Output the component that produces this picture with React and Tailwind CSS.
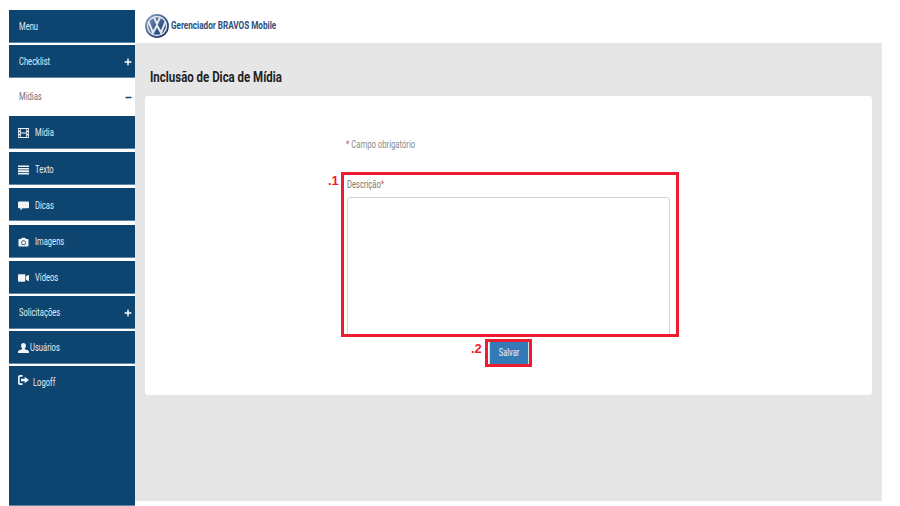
// Tela de inclusao de dica de midia
import { FaCamera, FaVideo, FaPlus, FaMinus } from 'react-icons/fa'

function IconFilm({ className }) {
  return (
    <svg viewBox="0 0 12 11" className={className} fill="currentColor">
      <path fillRule="evenodd" d="M0 0h12v11H0z M3 1.2v3.7h6V1.2z M3 6.100v3.700h6V6.100z M.8 1.200v1.600h1.300V1.200z M.8 4.700v1.600h1.300V4.700z M.8 8.200v1.600h1.300V8.200z M9.900 1.200v1.600h1.300V1.200z M9.900 4.700v1.600h1.300V4.700z M9.900 8.200v1.600h1.300V8.200z" />
    </svg>
  )
}

function IconLinhas({ className }) {
  return (
    <svg viewBox="0 0 12 10" className={className} fill="currentColor">
      <path d="M0 0h12v1.800H0z M0 2.700h12v1.800H0z M0 5.400h12v1.800H0z M0 8.100h12v1.800H0z" />
    </svg>
  )
}

function IconBalao({ className }) {
  return (
    <svg viewBox="0 0 12 10" className={className} fill="currentColor">
      <path d="M1.200 0h9.600C11.500 0 12 .5 12 1.200v5.100c0 .7-.5 1.200-1.200 1.200H5L2.800 10V7.500H1.200C.5 7.500 0 7 0 6.300V1.200C0 .5.500 0 1.200 0z" />
    </svg>
  )
}

function IconUser({ className }) {
  return (
    <svg viewBox="0 0 12 11" className={className} fill="currentColor">
      <path d="M6 0c1.700 0 2.700 1.200 2.700 2.900 0 1.300-.6 2.500-1.300 3.100v1c.6.4 4.600.9 4.600 2.600V11H0V9.600C0 7.900 4 7.400 4.600 7V6C3.900 5.400 3.300 4.200 3.300 2.900 3.300 1.200 4.300 0 6 0z" />
    </svg>
  )
}

function IconSair({ className }) {
  return (
    <svg viewBox="0 0 12 11" className={className} fill="currentColor">
      <path d="M5 0v1.800H2.700C2.100 1.800 1.800 2.200 1.800 2.700v5.600c0 .5.3.9.9.9H5V11H2.300C1 11 0 10 0 8.700V2.300C0 1 1 0 2.300 0z" />
      <path d="M3.300 4.100h4V2l4.700 3.500L7.300 9V6.900h-4z" />
    </svg>
  )
}

const ITENS = [
  { label: 'Menu', box: 'h-[33px] pt-[2px]', text: 'ml-[1px]' },
  { label: 'Checklist', box: 'h-[33px] mt-[2px] pt-[2px]', text: 'ml-[1px]', extra: 'plus' },
  { label: 'Mídias', box: 'h-[38px]', text: 'ml-[1px]', extra: 'minus', ativo: true },
  { label: 'Mídia', box: 'h-[33px] pt-[2px]', Icon: IconFilm, text: 'ml-[6px]' },
  { label: 'Texto', box: 'h-[33px] mt-[3px] pt-[4px]', Icon: IconLinhas, text: 'ml-[6px]' },
  { label: 'Dicas', box: 'h-[33px] mt-[3px] pt-[4px]', Icon: IconBalao, text: 'ml-[6px]' },
  { label: 'Imagens', box: 'h-[33px] mt-[4px] pt-[2px]', Icon: FaCamera, text: 'ml-[6px]' },
  { label: 'Vídeos', box: 'h-[33px] mt-[3px] pt-[2px]', Icon: FaVideo, text: 'ml-[6px]' },
  { label: 'Solicitações', box: 'h-[33px] mt-[2px] pt-[2px]', text: 'ml-[1px]', extra: 'plus' },
  { label: 'Usuários', box: 'h-[33px] mt-[2px] pt-[2px]', Icon: IconUser, text: 'ml-[1px]' },
  { label: 'Logoff', box: 'flex-1 mt-[2px] !items-start pt-[9px]', Icon: IconSair, text: 'ml-[4px]' },
]

function VwLogo() {
  return (
    <svg width="24" height="24" viewBox="0 0 24 24" className="shrink-0">
      <defs>
        <linearGradient id="vw" x1="0" y1="0" x2="1" y2="1">
          <stop offset="0" stopColor="#8fa3c0" />
          <stop offset="0.55" stopColor="#3a5a8c" />
          <stop offset="1" stopColor="#16294d" />
        </linearGradient>
      </defs>
      <circle cx="12" cy="12" r="11.900" fill="url(#vw)" />
      <circle cx="12" cy="12" r="9.500" fill="none" stroke="#dfe6ef" strokeWidth="1.400" />
      <path d="M8.900 3.400 L12 10 L15.100 3.400 M3.600 8 L8 18.600 L12 11.400 L16 18.600 L20.400 8" fill="none" stroke="#e4eaf2" strokeWidth="2" />
    </svg>
  )
}

function ItemMenu({ item }) {
  const { label, box, text, Icon, extra, ativo } = item
  return (
    <div className={`flex items-center pl-[9px] pr-[3px] ${box} ${ativo ? 'bg-white text-[#6b7280]' : 'bg-[#0d4470] border-b border-[#5f86a5] text-[#e6edf3]'}`}>
      {Icon && <Icon className="text-[#f2f5f8] text-[11px] w-[11px] h-[10px] shrink-0" />}
      <span className={`${text} text-[11px] flex-1 origin-left scale-x-[0.69]`}>{label}</span>
      {extra === 'plus' && <FaPlus className="text-[8px] text-white" />}
      {extra === 'minus' && <FaMinus className="text-[7px] text-[#0d4470]" />}
    </div>
  )
}

export default function App() {
  return (
    <div className="w-[900px] h-[506px] bg-white flex pl-[9px] pt-[10px] overflow-hidden font-['Roboto',sans-serif]">
      <nav className="w-[126px] h-[496px] flex flex-col shrink-0">
        {ITENS.map((item) => <ItemMenu key={item.label} item={item} />)}
      </nav>

      <div className="w-[747px] flex flex-col">
        <header className="h-[33px] flex items-center pl-[10px] pb-[2px] gap-[2px]">
          <VwLogo />
          <span className="flex-1 pt-[2px] text-[11px] font-bold text-[#2a4f7c] origin-left scale-x-[0.74]">Gerenciador BRAVOS Mobile</span>
        </header>

        <main className="h-[458px] bg-[#e6e6e6] px-[10px] flex flex-col">
          <h1 className="h-[53px] pt-[25px] ml-[5px] text-[14px] font-bold leading-[18px] text-[#222] origin-left scale-x-[0.82]">Inclusão de Dica de Mídia</h1>

          <section className="h-[299px] bg-white rounded-[3px] flex flex-col items-center pt-[42px]">
            <p className="w-[332px] ml-[6px] text-[11px] leading-[14px] text-[#8a8a8a] mb-[20px] origin-left scale-x-[0.7]">
              <span className="text-[#e05a5a]">*</span> Campo obrigatório
            </p>

            <div className="relative w-[338px] h-[165px] ml-[3px] border-[3px] border-[#ed1c2e]">
              <span className="absolute left-[-16px] top-[-2px] text-[13px] font-['Liberation_Sans'] font-bold leading-[16px] text-[#ed1c2e]">.1</span>
              <div className="h-full overflow-hidden px-[3px] pt-[3px]">
                <label className="block text-[11px] leading-[14px] text-[#777] mb-[5px] origin-left scale-x-[0.69]">
                  Descrição<span className="text-[#e05a5a]">*</span>
                </label>
                <textarea className="block w-[323px] h-[150px] border border-[#d4d4d4] rounded-[3px] resize-none bg-white" />
              </div>
            </div>

            <div className="relative mt-[2px] w-[47px] h-[28px] border-[3px] border-[#ed1c2e] flex items-center justify-center">
              <span className="absolute left-[-17px] top-[-1px] text-[13px] font-['Liberation_Sans'] font-bold leading-[16px] text-[#ed1c2e]">.2</span>
              <button className="w-[40px] h-[22px] bg-[#337ab7] border-x border-[#d5dfe8] text-[#f0f5fa]">
                <span className="block text-[11px] scale-x-[0.68]">Salvar</span>
              </button>
            </div>
          </section>
        </main>
      </div>
    </div>
  )
}
